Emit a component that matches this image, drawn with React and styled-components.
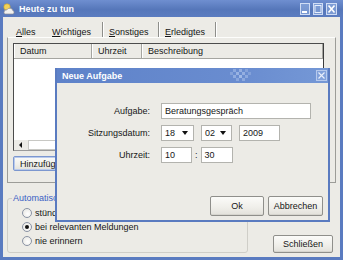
import { createGlobalStyle, styled } from "styled-components";

const GlobalStyle = createGlobalStyle`
  html, body {
    margin: 0;
    padding: 0;
    background: #ecebe6;
  }
  body {
    font-family: "Liberation Sans", Arial, sans-serif;
    font-size: 9px;
    color: #161616;
  }
`;

const Window = styled.div`
  position: relative;
  width: 343px;
  height: 260px;
  box-sizing: border-box;
  display: flex;
  flex-direction: column;
  background: #5a7bc0;
  overflow: hidden;
`;

const TitleBar = styled.div`
  height: 17px;
  flex: none;
  display: flex;
  align-items: center;
  padding: 0 6px 0 2px;
  background: linear-gradient(#6f8fd0, #5677ba 55%, #5b7cc0);
  color: #fff;
  font-weight: bold;
`;

const TitleText = styled.span`
  flex: 1;
  margin-left: 4px;
  letter-spacing: 0.1px;
`;

const WinButtons = styled.div`
  display: flex;
  gap: 3px;
`;

const WinButton = styled.div`
  width: ${(p) => p.$w || 10}px;
  height: 12px;
  box-sizing: border-box;
  border: 1px solid rgba(235, 242, 255, 0.75);
  background: rgba(150, 178, 228, 0.55);
  display: flex;
  align-items: center;
  justify-content: center;
`;

const Client = styled.div`
  flex: 1;
  margin: 0 3px 3px;
  padding: 3px 4px 4px;
  background: #ecebe6;
  display: flex;
  flex-direction: column;
`;

const TabBar = styled.div`
  height: 17px;
  display: flex;
  align-items: stretch;
  padding-left: 3px;
`;

const Tab = styled.div`
  width: ${(p) => p.$w}px;
  box-sizing: border-box;
  padding: 5px 0 0 6px;
  margin-top: 2px;
  border-right: ${(p) => (p.$sep ? "1px solid #8e8e8a" : "none")};
  box-shadow: ${(p) => (p.$sep ? "1px 0 0 #fff" : "none")};
  white-space: nowrap;
  u {
    text-decoration: underline;
  }
`;

const TabPanel = styled.div`
  height: 146px;
  box-sizing: border-box;
  border: 1px solid #9c9c98;
  border-top-color: #fdfdfb;
  padding: 5px 11px 0 5px;
  display: flex;
  flex-direction: column;
`;

const ListBox = styled.div`
  height: 108px;
  box-sizing: border-box;
  border: 1px solid #4c4c4c;
  border-right-color: #3c3c3c;
  border-bottom-color: #9a9a9a;
  background: #fff;
  display: flex;
  flex-direction: column;
`;

const ListHeader = styled.div`
  height: 14px;
  display: flex;
  background: #ecebe6;
  border-bottom: 1px solid #a5a5a0;
`;

const HeaderCell = styled.div`
  width: ${(p) => (p.$w ? `${p.$w}px` : "auto")};
  flex: ${(p) => (p.$w ? "none" : 1)};
  box-sizing: border-box;
  padding: 2px 0 0 5px;
  border-right: 1px solid #a5a5a0;
  border-left: 1px solid #fff;
`;

const ListBody = styled.div`
  flex: 1;
`;

const ScrollBar = styled.div`
  height: 10px;
  display: flex;
  align-items: stretch;
  background: #ecebe6;
  padding-left: 2px;
`;

const ScrollArrow = styled.div`
  width: 9px;
  display: flex;
  align-items: center;
  justify-content: center;
  &::before {
    content: "";
    border-top: 3px solid transparent;
    border-bottom: 3px solid transparent;
    border-right: 3px solid #111;
  }
`;

const ScrollThumb = styled.div`
  width: 120px;
  margin-left: 3px;
  background: #fff;
  border: 1px solid #c8c8c4;
`;

const PushButton = styled.button`
  width: ${(p) => p.$w}px;
  height: ${(p) => p.$h || 20}px;
  box-sizing: border-box;
  padding: 0;
  font: inherit;
  color: #161616;
  border: 1px solid ${(p) => (p.$focus ? "#7c97cf" : "#8f8f8b")};
  border-radius: 2px;
  background: linear-gradient(#fbfbf9, #efeee9 60%, #e2e1db);
  box-shadow: ${(p) =>
    p.$focus ? "inset 0 0 0 1px #b9caec" : "inset 0 -1px 0 #d6d5cf"};
  text-align: center;
`;

const AddButton = styled(PushButton)`
  margin-top: 5px;
  text-align: left;
  padding-left: 6px;
`;

const BottomRow = styled.div`
  flex: 1;
  display: flex;
  align-items: flex-end;
  justify-content: space-between;
  padding-right: 3px;
`;

const GroupBox = styled.fieldset`
  width: 241px;
  box-sizing: border-box;
  margin: 0;
  padding: 4px 8px 6px 14px;
  border: 1px solid #cfcec8;
  border-radius: 3px;
  display: flex;
  flex-direction: column;
  gap: 3px;
`;

const GroupLegend = styled.legend`
  color: #3a5ec4;
  padding: 0 1px;
  margin-left: -10px;
`;

const RadioRow = styled.label`
  display: flex;
  align-items: center;
  gap: 3px;
  height: 11px;
`;

const RadioCircle = styled.span`
  width: 10px;
  height: 10px;
  box-sizing: border-box;
  border-radius: 50%;
  border: 1px solid #8a93a4;
  background: radial-gradient(circle at 60% 60%, #fff, #e4e3de);
  display: flex;
  align-items: center;
  justify-content: center;
  &::after {
    content: "";
    width: 4px;
    height: 4px;
    border-radius: 50%;
    background: ${(p) => (p.$checked ? "#111" : "transparent")};
  }
`;

const Dialog = styled.div`
  position: absolute;
  left: 55px;
  top: 68px;
  width: 275px;
  height: 154px;
  box-sizing: border-box;
  display: flex;
  flex-direction: column;
  padding: 0 2px 2px;
  background: #5a7bc0;
`;

const DialogTitle = styled.div`
  height: 15px;
  flex: none;
  display: flex;
  align-items: center;
  padding: 0 1px 0 5px;
  background: linear-gradient(90deg, #5e82c9, #6a8dd0 70%, #7598d6);
  color: #fff;
  font-weight: bold;
`;

const DialogTitleText = styled.span`
  flex: 1;
`;

const Pattern = styled.svg`
  margin-right: 65px;
`;

const DialogClose = styled.div`
  width: 11px;
  height: 11px;
  box-sizing: border-box;
  border: 1px solid rgba(225, 235, 252, 0.55);
  background: rgba(150, 178, 228, 0.4);
  display: flex;
  align-items: center;
  justify-content: center;
`;

const DialogBody = styled.div`
  flex: 1;
  background: #ecebe6;
  display: flex;
  flex-direction: column;
  padding: 20px 5px 4px 0;
`;

const Form = styled.div`
  display: grid;
  grid-template-columns: 93px 1fr;
  column-gap: 11px;
  row-gap: 6px;
  grid-auto-rows: 16px;
`;

const Label = styled.div`
  text-align: right;
  align-self: center;
`;

const Fields = styled.div`
  display: flex;
  align-items: stretch;
  gap: ${(p) => p.$gap ?? 7}px;
`;

const Input = styled.div`
  width: ${(p) => p.$w}px;
  box-sizing: border-box;
  border: 1px solid #b3b3ae;
  background: #fff;
  padding: 2px 0 0 3px;
  white-space: nowrap;
`;

const Combo = styled(Input)`
  display: flex;
  justify-content: space-between;
  padding-right: 5px;
  &::after {
    content: "";
    align-self: center;
    margin-top: -2px;
    border-left: 3px solid transparent;
    border-right: 3px solid transparent;
    border-top: 4px solid #111;
  }
`;

const Colon = styled.span`
  align-self: center;
  margin: 0 1px;
`;

const DialogButtons = styled.div`
  margin-top: auto;
  display: flex;
  justify-content: flex-end;
  gap: 4px;
`;

function AppIcon() {
  return (
    <svg width="13" height="13" viewBox="0 0 13 13">
      <circle cx="5" cy="5" r="3.2" fill="#f3d25a" stroke="#c59d2a" strokeWidth="0.6" />
      <path
        d="M2 10.5 Q2 7.5 5 7.8 Q6 5.8 8.3 6.3 Q10.8 6.5 10.8 8.6 Q12.6 9 12 11 Q11.6 12 10.5 12 L3.2 12 Q1.9 11.8 2 10.5 Z"
        fill="#f2f2f0"
        stroke="#8d8d92"
        strokeWidth="0.7"
      />
    </svg>
  );
}

function TitlePattern() {
  const cells = [
    [0, 4, 0.35],
    [3, 1, 0.45],
    [3, 7, 0.5],
    [6, 4, 0.6],
    [6, 10, 0.4],
    [9, 1, 0.55],
    [9, 7, 0.7],
    [12, 4, 0.55],
    [12, 10, 0.45],
    [15, 1, 0.35],
    [15, 7, 0.45],
    [18, 4, 0.3],
  ];
  return (
    <Pattern width="21" height="15" viewBox="0 0 21 15">
      {cells.map(([x, y, o]) => (
        <rect key={`${x}-${y}`} x={x} y={y} width="3" height="3" fill="#b8ccef" opacity={o} />
      ))}
    </Pattern>
  );
}

function Radio({ checked, children }) {
  return (
    <RadioRow>
      <RadioCircle $checked={checked} />
      {children}
    </RadioRow>
  );
}

export default function App() {
  return (
    <>
      <GlobalStyle />
      <Window>
        <TitleBar>
          <AppIcon />
          <TitleText>Heute zu tun</TitleText>
          <WinButtons>
            <WinButton>
              <svg width="8" height="10" viewBox="0 0 8 10">
                <rect x="1" y="7" width="5" height="2" fill="#fff" />
              </svg>
            </WinButton>
            <WinButton>
              <svg width="8" height="10" viewBox="0 0 8 10">
                <rect x="1" y="1.5" width="6" height="7" fill="none" stroke="#e6eefc" strokeWidth="1" />
              </svg>
            </WinButton>
            <WinButton $w={11}>
              <svg width="9" height="10" viewBox="0 0 9 10">
                <path d="M1.5 1.5 L7.5 8.5 M7.5 1.5 L1.5 8.5" stroke="#fff" strokeWidth="1.6" />
              </svg>
            </WinButton>
          </WinButtons>
        </TitleBar>

        <Client>
          <TabBar>
            <Tab $w={36}>
              <u>A</u>lles
            </Tab>
            <Tab $w={57} $sep>
              <u>W</u>ichtiges
            </Tab>
            <Tab $w={56} $sep>
              <u>S</u>onstiges
            </Tab>
            <Tab $w={57} $sep>
              <u>E</u>rledigtes
            </Tab>
          </TabBar>

          <TabPanel>
            <ListBox>
              <ListHeader>
                <HeaderCell $w={78}>Datum</HeaderCell>
                <HeaderCell $w={50}>Uhrzeit</HeaderCell>
                <HeaderCell>Beschreibung</HeaderCell>
              </ListHeader>
              <ListBody />
              <ScrollBar>
                <ScrollArrow />
                <ScrollThumb />
              </ScrollBar>
            </ListBox>
            <AddButton $w={72} $h={15} $focus>
              Hinzufügen
            </AddButton>
          </TabPanel>

          <BottomRow>
            <GroupBox>
              <GroupLegend>Automatische Erinnerung</GroupLegend>
              <Radio>stündlich</Radio>
              <Radio checked>bei relevanten Meldungen</Radio>
              <Radio>nie erinnern</Radio>
            </GroupBox>
            <PushButton $w={60} $h={18}>
              Schließen
            </PushButton>
          </BottomRow>
        </Client>

        <Dialog>
          <DialogTitle>
            <DialogTitleText>Neue Aufgabe</DialogTitleText>
            <TitlePattern />
            <DialogClose>
              <svg width="7" height="7" viewBox="0 0 7 7">
                <path d="M0.5 0.5 L6.5 6.5 M6.5 0.5 L0.5 6.5" stroke="#e8effc" strokeWidth="1.2" />
              </svg>
            </DialogClose>
          </DialogTitle>
          <DialogBody>
            <Form>
              <Label>Aufgabe:</Label>
              <Fields>
                <Input $w={150}>Beratungsgespräch</Input>
              </Fields>
              <Label>Sitzungsdatum:</Label>
              <Fields>
                <Combo $w={33}>18</Combo>
                <Combo $w={31}>02</Combo>
                <Input $w={41}>2009</Input>
              </Fields>
              <Label>Uhrzeit:</Label>
              <Fields $gap={2}>
                <Input $w={31}>10</Input>
                <Colon>:</Colon>
                <Input $w={32}>30</Input>
              </Fields>
            </Form>
            <DialogButtons>
              <PushButton $w={54} $h={20}>
                Ok
              </PushButton>
              <PushButton $w={55} $h={20}>
                Abbrechen
              </PushButton>
            </DialogButtons>
          </DialogBody>
        </Dialog>
      </Window>
    </>
  );
}
